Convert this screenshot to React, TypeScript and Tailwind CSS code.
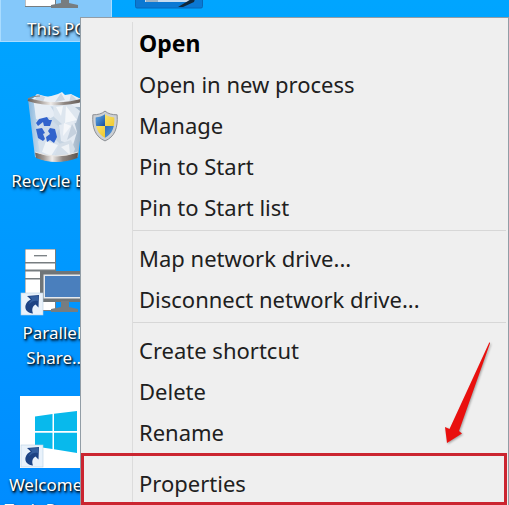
import type { ReactNode } from 'react';

interface DesktopTileProps {
  label: string;
  icon: ReactNode;
  selected?: boolean;
}

interface MenuEntry {
  label: string;
  bold?: boolean;
  icon?: ReactNode;
}

function ShortcutBadge() {
  return (
    <g>
      <rect x="1" y="49" width="22" height="22" fill="#e9f2fb" stroke="#b9cfe3" strokeWidth="0.6" />
      <path
        d="M7 52 L19 51 L18.5 63.5 L15.5 60.5 C12.5 62.5 11.5 65 13 69.500 C8 69 4.500 66 5.500 61.500 C6.300 58.500 8.300 57 10.800 55.600 Z"
        fill="#1d4384"
      />
      <path d="M9.5 52.6 L18.3 52 L18 57 C15 56 12 57 9 60 C9.5 58 10.5 56.5 12.2 55.4 Z" fill="#355f9f" />
    </g>
  );
}

function ComputerIcon({ shortcut }: { shortcut?: boolean }) {
  return (
    <svg viewBox="0 0 72 72" className="size-[72px]" aria-hidden="true">
      <rect x="5" y="5" width="31" height="62" fill="#777d80" />
      <rect x="5.5" y="5.5" width="29.5" height="12.5" fill="#fff" />
      <rect x="5.5" y="19.5" width="29.5" height="6" fill="#fff" />
      <rect x="5.5" y="27.5" width="29.5" height="6.5" fill="#fff" />
      <rect x="5.5" y="35.5" width="29.5" height="30.5" fill="#fff" />
      <path d="M14 11.7h13" stroke="#777d80" strokeWidth="1.3" />
      <rect x="20" y="27" width="52" height="31" fill="#6f7578" />
      <rect x="23.5" y="30.5" width="48.5" height="24" fill="#e6eaee" />
      <rect x="25" y="32" width="47" height="21" fill="#4a7fbd" />
      <path d="M41 57h8v6l9 2v3H31v-3l10-2z" fill="#777d80" />
      {shortcut && <ShortcutBadge />}
    </svg>
  );
}

function RecycleBinIcon() {
  return (
    <svg viewBox="0 0 72 72" className="size-[72px]" aria-hidden="true">
      <defs>
        <linearGradient id="glass" x1="0" x2="1">
          <stop offset="0" stopColor="#86b6dd" />
          <stop offset="0.2" stopColor="#c9dbec" />
          <stop offset="0.7" stopColor="#c3d0de" />
          <stop offset="1" stopColor="#8fa6bb" />
        </linearGradient>
        <linearGradient id="steel" x1="0" x2="1">
          <stop offset="0" stopColor="#6b625d" />
          <stop offset="0.2" stopColor="#a29a95" />
          <stop offset="0.4" stopColor="#efecea" />
          <stop offset="0.65" stopColor="#8d8580" />
          <stop offset="1" stopColor="#5d5550" />
        </linearGradient>
      </defs>
      <path d="M8 7 Q36 1 65 7 L58 65 Q36 74 15 65 Z" fill="url(#glass)" />
      <path d="M12 7 L17 2 L28 5 L38 2 L42 0 L45 3 L51 2 L57 5 L63 8 L60 15 L15 14 Z" fill="#e9eff6" />
      <path d="M17 2 L25 5 L23 10 L15 8 Z M41 1 L35 10 L45 8 Z M51 2 L49 11 L58 9 Z" fill="#cbd6e2" />
      <path d="M14 12 L29 12 L36 23 L24 30 L16 27 Z" fill="#e6edf5" />
      <path d="M33 12 L51 12 L60 19 L56 31 L43 33 L34 25 Z" fill="#dde6ef" />
      <path d="M36 15 L43 14 L41 24 Z M46 14 L57 28 L45 31 Z" fill="#f4f7fa" />
      <path d="M16 29 L29 25 L40 36 L31 49 L18 46 Z" fill="#cedbea" />
      <path d="M39 33 L54 29 L57 40 L53 53 L41 49 Z" fill="#e3eaf2" />
      <path d="M44 31 L51 34 L43 44 Z" fill="#f5f7fa" />
      <path d="M52 32 L57 41 L47 48 Z" fill="#c5d1de" />
      <path d="M18 49 L32 44 L40 52 L35 64 L20 62 Z" fill="#d6e1ed" />
      <path d="M26 49 L38 53 L31 64 L22 60 Z" fill="#f0f4f8" />
      <path d="M39 52 L51 48 L55 57 L52 64 L35 64 Z" fill="#d4dee8" />
      <path d="M41 55 L49 52 L50 63 Z" fill="#eef2f6" />
      <path d="M8 7.500 Q36 16 65 7.500" fill="none" stroke="url(#steel)" strokeWidth="3" />
      <path d="M8 7 Q13 4 20 4" fill="none" stroke="#8b8581" strokeWidth="1.2" />
      <path d="M15 60 Q36 68 58 60 L57.500 66 Q36 74 16 66 Z" fill="url(#steel)" />
      <path d="M15 60 Q36 68 58 60" fill="none" stroke="#eae7e4" strokeWidth="1" />
      <g fill="#3163cd">
        <path d="M19 27 L27 25 L29 28 L32 28 L30 34 L24 34 L23 30 L18 34 L16 31 Z" />
        <path d="M30 36 L35 37 L37 45 L34 51 L30 48 L27 50 L26 45 L30 42 L28 39 Z" />
        <path d="M16 37 L22 36 L25 41 L23 42 L25 47 L23 49 L18 46 Z" />
      </g>
    </svg>
  );
}

function WelcomeIcon() {
  return (
    <svg viewBox="0 0 72 72" className="size-[72px]" aria-hidden="true">
      <rect width="72" height="72" fill="#fff" />
      <g fill="#08b9ec">
        <path d="M15 20.5 L32.5 18 V35 H15 Z" />
        <path d="M34 17.8 L57 15 V35 H34 Z" />
        <path d="M15 36.8 H32.5 V53 L15 50.5 Z" />
        <path d="M34 36.8 H57 V57 L34 53.3 Z" />
      </g>
      <ShortcutBadge />
    </svg>
  );
}

function RunIcon() {
  return (
    <svg viewBox="0 0 72 72" className="size-[72px]" aria-hidden="true">
      <rect x="3.5" y="10" width="67" height="58" rx="1.5" fill="#0b78d3" stroke="#0868b8" />
      <rect x="13" y="16" width="49" height="46" fill="#c9dcf0" />
      <path d="M14 61h12M16 59h6" stroke="#71879c" strokeWidth="1.2" />
      <path d="M64 56 L56 61 L46 67 L51 67 L62 62 Z" fill="#12283b" />
    </svg>
  );
}

function ShieldIcon() {
  return (
    <svg viewBox="0 0 30 34" className="h-8 w-7" aria-hidden="true">
      <defs>
        <clipPath id="shield-face">
          <path d="M15 4.5 C18 6.5 21 7.5 25 7.8 C25.5 18 23 25.5 15 29.5 C7 25.5 4.500 18 5 7.800 C9 7.500 12 6.500 15 4.500 Z" />
        </clipPath>
        <linearGradient id="shield-blue" x1="0" y1="0" x2="1" y2="1">
          <stop offset="0" stopColor="#2c66b5" />
          <stop offset="0.5" stopColor="#4f93d4" />
          <stop offset="1" stopColor="#174f9f" />
        </linearGradient>
        <linearGradient id="shield-gold" x1="0" y1="0" x2="1" y2="1">
          <stop offset="0" stopColor="#fbe779" />
          <stop offset="1" stopColor="#edc321" />
        </linearGradient>
      </defs>
      <path
        d="M15 1 C18.500 4 22.500 5 28 5 C29 19 25.500 28.500 15 33 C4.500 28.500 1 19 2 5 C7.500 5 11.500 4 15 1 Z"
        fill="#ccd0d4"
        stroke="#85898e"
      />
      <g clipPath="url(#shield-face)">
        <rect width="15" height="17" fill="url(#shield-blue)" />
        <rect x="15" width="15" height="17" fill="url(#shield-gold)" />
        <rect y="17" width="15" height="17" fill="url(#shield-gold)" />
        <rect x="15" y="17" width="15" height="17" fill="url(#shield-blue)" />
      </g>
    </svg>
  );
}

function DesktopTile({ label, icon, selected }: DesktopTileProps) {
  return (
    <div className="h-[152px]">
      <button
        type="button"
        className={`flex w-full flex-col items-center gap-1 ${selected ? 'border-r border-b border-l border-[#a9dcff] bg-[#84c8fa]' : ''}`}
      >
        {icon}
        <span className="text-[17px] leading-[25px] whitespace-pre text-white [text-shadow:1px_1px_2px_#000,1px_2px_3px_#001e3c]">
          {label}
        </span>
      </button>
    </div>
  );
}

function MenuItem({ label, bold, icon }: MenuEntry) {
  return (
    <button type="button" role="menuitem" className="flex h-[41px] w-full items-center text-left">
      <span className="flex w-12 shrink-0 justify-center">{icon}</span>
      <span className={`pl-2.5 whitespace-nowrap ${bold ? 'text-[23px] font-bold text-black' : 'text-[22px] text-[#202020]'}`}>
        {label}
      </span>
    </button>
  );
}

const groups: MenuEntry[][] = [
  [
    { label: 'Open', bold: true },
    { label: 'Open in new process' },
    { label: 'Manage', icon: <ShieldIcon /> },
    { label: 'Pin to Start' },
    { label: 'Pin to Start list' },
  ],
  [{ label: 'Map network drive...' }, { label: 'Disconnect network drive...' }],
  [{ label: 'Create shortcut' }, { label: 'Delete' }, { label: 'Rename' }],
];

function ContextMenu() {
  return (
    <div
      role="menu"
      className="absolute top-[17px] right-0 left-20 border border-[#929da6] bg-[#efefef] py-[5px]"
    >
      {/* Divider between the icon gutter and the labels */}
      <div className="absolute inset-y-1 left-[51px] w-px bg-[#dcdcdc]" />
      {groups.map((entries, i) => (
        <div key={i}>
          {i > 0 && (
            <div className="mr-0.5 ml-[52px] h-2.5 pt-0.5">
              <div className="h-px bg-[#d7d7d7]" />
            </div>
          )}
          {entries.map((entry) => (
            <MenuItem key={entry.label} {...entry} />
          ))}
        </div>
      ))}
      <div className="relative mr-px pt-2.5 pb-px">
        <MenuItem label="Properties" />
        {/* Callout around the entry to click */}
        <div className="pointer-events-none absolute inset-0 border-3 border-[#cb2530]" />
        <svg
          viewBox="0 0 60 112"
          className="pointer-events-none absolute right-2 bottom-full h-[112px] w-[60px] drop-shadow-[1px_1px_1px_#00000055]"
          aria-hidden="true"
        >
          <path d="M50.500 1 L51 2.500 L20 90 L23 92.500 L8 102 L6 86 L10.500 88 Z" fill="#e9100e" />
        </svg>
      </div>
    </div>
  );
}

export default function App() {
  return (
    <main className="relative h-screen overflow-hidden bg-linear-to-b from-[#00a5ff] to-[#008cff] font-['Noto_Sans','Open_Sans',sans-serif]">
      <div className="-mt-[60px] grid grid-cols-[112px_112px]">
        <div>
          <DesktopTile label="This PC" icon={<ComputerIcon />} selected />
          <DesktopTile label="Recycle Bin" icon={<RecycleBinIcon />} />
          <DesktopTile label={'Parallels\nShare...'} icon={<ComputerIcon shortcut />} />
          <DesktopTile label={'Welcome to\nTech Preview'} icon={<WelcomeIcon />} />
        </div>
        <div>
          <DesktopTile label="" icon={<RunIcon />} />
        </div>
      </div>
      <ContextMenu />
    </main>
  );
}
